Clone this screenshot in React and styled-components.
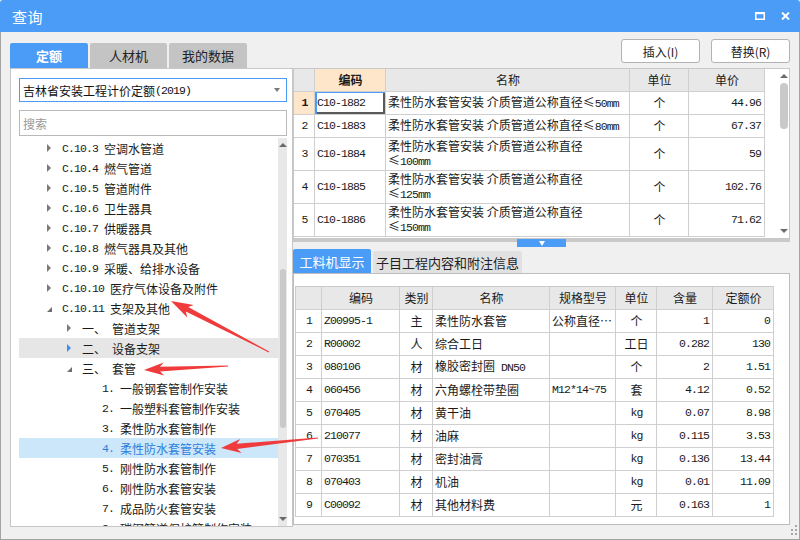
import React from 'react';
import styled, { createGlobalStyle } from 'styled-components';

const CJK = `"Noto Sans CJK SC", "Noto Sans", sans-serif`;
const MONO = `"Liberation Mono", "DejaVu Sans Mono", monospace`;

const GlobalStyle = createGlobalStyle`
  html, body { margin: 0; padding: 0; background: #ffffff; }
  body { font-family: ${CJK}; font-size: 12px; color: #1e1e1e; }
  * { box-sizing: border-box; }
`;

const Window = styled.div`
  position: relative;
  width: 800px;
  height: 540px;
  display: flex;
  flex-direction: column;
  background: #f0f0f0;
  font-family: ${CJK};
  overflow: hidden;
`;

const TitleBar = styled.div`
  height: 32px;
  flex: none;
  background: #4a9cf7;
  color: #fff;
  display: flex;
  align-items: center;
  padding: 0 10px 0 12px;
  border-radius: 3px 3px 0 0;
`;

const Title = styled.div`
  flex: 1;
  font-size: 15px;
  letter-spacing: 0.5px;
`;

const TitleButtons = styled.div`
  display: flex;
  align-items: center;
  gap: 16px;
`;

const Body = styled.div`
  flex: 1;
  display: flex;
  align-items: flex-start;
  padding: 7px 0 0 9px;
  border: 1px solid #a3a3a3;
  border-top: none;
`;

/* ---------- left column ---------- */
const LeftCol = styled.div`
  width: 283px;
  margin-top: 4px;
  display: flex;
  flex-direction: column;
  flex: none;
`;

const TabRow = styled.div`
  display: flex;
  gap: 2px;
  height: 25px;
  align-items: flex-end;
`;

const MainTab = styled.div`
  width: ${p => p.$w}px;
  height: 25px;
  display: flex;
  align-items: center;
  justify-content: center;
  font-size: 13px;
  border-radius: 2px 2px 0 0;
  background: ${p => (p.$active ? '#4a9cf7' : '#c4c4c4')};
  color: ${p => (p.$active ? '#ffffff' : '#222222')};
  font-weight: ${p => (p.$active ? 700 : 400)};
`;

const LeftPanel = styled.div`
  height: 459px;
  background: #fff;
  border: 1px solid #c6c6c6;
  padding: 9px 5px 0 8px;
  display: flex;
  flex-direction: column;
`;

const Select = styled.div`
  height: 24px;
  border: 1px solid #4a9cf7;
  display: flex;
  align-items: center;
  padding: 0 6px 0 3px;
  font-size: 12px;
  color: #111;
`;

const SelectText = styled.div`
  flex: 1;
  display: flex;
  align-items: center;
`;

const CaretDown = styled.span`
  width: 0;
  height: 0;
  border-left: 3px solid transparent;
  border-right: 3px solid transparent;
  border-top: 4px solid #7a7a7a;
`;

const Search = styled.div`
  height: 26px;
  margin-top: 8px;
  border: 1px solid #b9b9b9;
  display: flex;
  align-items: center;
  padding-left: 3px;
  color: #9a9a9a;
  font-size: 12px;
`;

const Tree = styled.div`
  flex: 1;
  margin-top: 2px;
  display: flex;
  overflow: hidden;
`;

const TreeRows = styled.div`
  flex: 1;
  overflow: hidden;
`;

const TreeRow = styled.div`
  height: 20px;
  display: flex;
  align-items: center;
  padding-left: ${p => 27 + (p.$level - 1) * 20}px;
  white-space: nowrap;
  font-size: 12px;
  background: ${p => (p.$selected ? '#cce6fa' : p.$hover ? '#e6e6e6' : 'transparent')};
  color: ${p => (p.$selected ? '#2f80dc' : '#1a1a1a')};
`;

const ToggleBox = styled.span`
  width: 16px;
  height: 20px;
  flex: none;
  display: flex;
  align-items: center;
`;

const ClosedTri = styled.span`
  width: 0;
  height: 0;
  border-top: 4px solid transparent;
  border-bottom: 4px solid transparent;
  border-left: 4px solid ${p => (p.$hover ? '#3d8fe9' : '#7a7a7a')};
  margin-left: 1px;
`;

const OpenTri = styled.span`
  width: 0;
  height: 0;
  border-left: 5px solid transparent;
  border-bottom: 5px solid #6e6e6e;
  margin-left: 1px;
  margin-top: 2px;
`;

const Code = styled.span`
  font-family: ${p => (p.$cjk ? CJK : MONO)};
  font-size: ${p => (p.$cjk ? 12 : 11.5)}px;
  letter-spacing: ${p => (p.$cjk ? 0 : -0.9)}px;
  margin-right: 6px;
`;

const Label = styled.span`
  font-family: ${CJK};
  font-size: 12px;
`;

const Mono = styled.span`
  font-family: ${MONO};
  font-size: 11.5px;
  letter-spacing: -0.9px;
`;

const VScroll = styled.div`
  width: ${p => p.$w}px;
  flex: none;
  display: flex;
  flex-direction: column;
  align-items: center;
  background: ${p => p.$track};
`;

const ScrollArrow = styled.div`
  height: ${p => p.$h}px;
  flex: none;
  display: flex;
  align-items: center;
  justify-content: center;
`;

const UpTri = styled.span`
  width: 0;
  height: 0;
  border-left: 4px solid transparent;
  border-right: 4px solid transparent;
  border-bottom: 4px solid #6a6a6a;
`;

const DownTri = styled.span`
  width: 0;
  height: 0;
  border-left: 4px solid transparent;
  border-right: 4px solid transparent;
  border-top: 4px solid #6a6a6a;
`;

const ScrollGap = styled.div`
  flex: ${p => (p.$grow ? 1 : 'none')};
  height: ${p => (p.$grow ? 'auto' : `${p.$h}px`)};
`;

const Thumb = styled.div`
  width: ${p => p.$w}px;
  height: ${p => p.$h}px;
  flex: none;
  border-radius: ${p => p.$w / 2}px;
  background: #c9c9c9;
`;

/* ---------- right column ---------- */
const RightCol = styled.div`
  width: 497px;
  flex: none;
  display: flex;
  flex-direction: column;
`;

const ButtonRow = styled.div`
  display: flex;
  justify-content: flex-end;
  gap: 11px;
  height: 24px;
`;

const Button = styled.div`
  width: 79px;
  height: 24px;
  background: #ffffff;
  border: 1px solid #b3b3b3;
  border-radius: 3px;
  display: flex;
  align-items: center;
  justify-content: center;
  font-size: 12px;
  color: #222;
`;

const TopPanel = styled.div`
  margin-top: 5px;
  height: 171px;
  background: #fff;
  border: 1px solid #c8c8c8;
  display: flex;
  overflow: hidden;
`;

const Grid = styled.div`
  width: ${p => p.$w}px;
  flex: none;
  border-left: ${p => (p.$outline ? '1px solid #cacaca' : 'none')};
  border-top: ${p => (p.$outline ? '1px solid #cacaca' : 'none')};
  align-self: flex-start;
`;

const GridRow = styled.div`
  display: grid;
  grid-template-columns: ${p => p.$cols};
  height: ${p => p.$h}px;
`;

const Cell = styled.div`
  border-right: 1px solid #cfcfcf;
  border-bottom: 1px solid #cfcfcf;
  display: flex;
  align-items: center;
  justify-content: ${p => (p.$align === 'right' ? 'flex-end' : p.$align === 'center' ? 'center' : 'flex-start')};
  padding: 0 ${p => (p.$align === 'right' ? 3 : 1)}px 0 2px;
  background: ${p => p.$bg || 'transparent'};
  font-weight: ${p => (p.$bold ? 700 : 400)};
  font-size: 12px;
  line-height: 14px;
  white-space: pre-line;
  overflow: hidden;
  color: #1a1a1a;
  box-shadow: ${p => (p.$focus ? 'inset 2px 1px 0 #4a9cf7, inset -2px -2px 0 #5a5a5a' : 'none')};
`;

const NameText = styled.div`
  white-space: pre-line;
  line-height: 14px;
`;

const Splitter = styled.div`
  height: 8px;
  display: flex;
  justify-content: center;
  background: linear-gradient(#c9c9c9 0 3px, transparent 3px);
`;

const SplitHandle = styled.div`
  width: 49px;
  height: 8px;
  background: #4a9cf7;
  display: flex;
  align-items: center;
  justify-content: center;
`;

const HandleTri = styled.span`
  width: 0;
  height: 0;
  border-left: 3px solid transparent;
  border-right: 3px solid transparent;
  border-top: 5px solid #ffffff;
`;

const SubTabRow = styled.div`
  margin-top: 2px;
  height: 24px;
  display: flex;
  align-items: flex-end;
  gap: 2px;
`;

const SubTab = styled.div`
  width: ${p => p.$w}px;
  height: ${p => (p.$active ? 24 : 22)}px;
  display: flex;
  align-items: center;
  justify-content: center;
  font-size: 13px;
  border-radius: 2px 2px 0 0;
  background: ${p => (p.$active ? '#4a9cf7' : '#e1e1e1')};
  color: ${p => (p.$active ? '#ffffff' : '#222222')};
`;

const BottomPanel = styled.div`
  height: 252px;
  background: #fff;
  border: 1px solid #bdbdbd;
  padding: 12px 0 0 1px;
  overflow: hidden;
`;

const Overlay = styled.svg`
  position: absolute;
  left: 0;
  top: 0;
  pointer-events: none;
`;

const Grip = styled.svg`
  position: absolute;
  right: 2px;
  bottom: 4px;
`;

/* ---------- data ---------- */
const tree = [
  { level: 1, state: 'closed', code: 'C.10.3', label: '空调水管道' },
  { level: 1, state: 'closed', code: 'C.10.4', label: '燃气管道' },
  { level: 1, state: 'closed', code: 'C.10.5', label: '管道附件' },
  { level: 1, state: 'closed', code: 'C.10.6', label: '卫生器具' },
  { level: 1, state: 'closed', code: 'C.10.7', label: '供暖器具' },
  { level: 1, state: 'closed', code: 'C.10.8', label: '燃气器具及其他' },
  { level: 1, state: 'closed', code: 'C.10.9', label: '采暖、给排水设备' },
  { level: 1, state: 'closed', code: 'C.10.10', label: '医疗气体设备及附件' },
  { level: 1, state: 'open', code: 'C.10.11', label: '支架及其他' },
  { level: 2, state: 'closed', code: '一、', cjk: true, label: '管道支架' },
  { level: 2, state: 'closed', code: '二、', cjk: true, label: '设备支架', hover: true },
  { level: 2, state: 'open', code: '三、', cjk: true, label: '套管' },
  { level: 3, code: '1.', label: '一般钢套管制作安装' },
  { level: 3, code: '2.', label: '一般塑料套管制作安装' },
  { level: 3, code: '3.', label: '柔性防水套管制作' },
  { level: 3, code: '4.', label: '柔性防水套管安装', selected: true },
  { level: 3, code: '5.', label: '刚性防水套管制作' },
  { level: 3, code: '6.', label: '刚性防水套管安装' },
  { level: 3, code: '7.', label: '成品防火套管安装' },
  { level: 3, code: '8.', label: '碳钢管道保护管制作安装' },
];

const topCols = '21px 71px 244px 59px 76px';
const topRows = [
  { n: '1', code: 'C10-1882', name: ['柔性防水套管安装 介质管道公称直径≤', '50mm'], unit: '个', price: '44.96', h: 23 },
  { n: '2', code: 'C10-1883', name: ['柔性防水套管安装 介质管道公称直径≤', '80mm'], unit: '个', price: '67.37', h: 23 },
  { n: '3', code: 'C10-1884', name: ['柔性防水套管安装 介质管道公称直径\n≤', '100mm'], unit: '个', price: '59', h: 33 },
  { n: '4', code: 'C10-1885', name: ['柔性防水套管安装 介质管道公称直径\n≤', '125mm'], unit: '个', price: '102.76', h: 33 },
  { n: '5', code: 'C10-1886', name: ['柔性防水套管安装 介质管道公称直径\n≤', '150mm'], unit: '个', price: '71.62', h: 33 },
];

const botCols = '26px 78px 33px 117px 66px 41px 56px 61px';
const botRows = [
  ['1', 'Z00995-1', '主', '柔性防水套管', '公称直径…', '个', '1', '0'],
  ['2', 'R00002', '人', '综合工日', '', '工日', '0.282', '130'],
  ['3', '080106', '材', '橡胶密封圈 DN50', '', '个', '2', '1.51'],
  ['4', '060456', '材', '六角螺栓带垫圈', 'M12*14~75', '套', '4.12', '0.52'],
  ['5', '070405', '材', '黄干油', '', 'kg', '0.07', '8.98'],
  ['6', '210077', '材', '油麻', '', 'kg', '0.115', '3.53'],
  ['7', '070351', '材', '密封油膏', '', 'kg', '0.136', '13.44'],
  ['8', '070403', '材', '机油', '', 'kg', '0.01', '11.09'],
  ['9', 'C00092', '材', '其他材料费', '', '元', '0.163', '1'],
];

function arrowPoints(tail, tip, o) {
  const { head = 20, hw = 7, neck = 4, sw = 2.5, tw = 0.4 } = o || {};
  const [tx, ty] = tail;
  const [px, py] = tip;
  const dx = px - tx;
  const dy = py - ty;
  const L = Math.hypot(dx, dy);
  const ux = dx / L;
  const uy = dy / L;
  const nx = -uy;
  const ny = ux;
  const bx = px - ux * head;
  const by = py - uy * head;
  const kx = bx + ux * neck;
  const ky = by + uy * neck;
  const pts = [
    [px, py],
    [bx + nx * hw, by + ny * hw],
    [kx + nx * sw, ky + ny * sw],
    [tx + nx * tw, ty + ny * tw],
    [tx - nx * tw, ty - ny * tw],
    [kx - nx * sw, ky - ny * sw],
    [bx - nx * hw, by - ny * hw],
  ];
  return pts.map(p => `${p[0].toFixed(1)},${p[1].toFixed(1)}`).join(' ');
}

function CellText({ text }) {
  if (/^[A-Za-z0-9.*~\-]+$/.test(text)) return <Mono>{text}</Mono>;
  const m = text.match(/^(.*?)( [A-Z]+\d+)$/);
  if (m) {
    return (
      <span>
        {m[1]}
        <Mono>{m[2]}</Mono>
      </span>
    );
  }
  return <span>{text}</span>;
}

export default function App() {
  return (
    <>
      <GlobalStyle />
      <Window>
        <TitleBar>
          <Title>查询</Title>
          <TitleButtons>
            <svg width="10" height="8" viewBox="0 0 10 8">
              <rect x="0.75" y="1" width="8.5" height="6.25" fill="none" stroke="#fff" strokeWidth="1.5" />
              <rect x="0" y="0" width="10" height="2.2" fill="#fff" />
            </svg>
            <svg width="9" height="8" viewBox="0 0 9 8">
              <path d="M1 0.5 L8 7.5 M8 0.5 L1 7.5" stroke="#fff" strokeWidth="2" />
            </svg>
          </TitleButtons>
        </TitleBar>
        <Body>
          <LeftCol>
            <TabRow>
              <MainTab $active $w={78}>定额</MainTab>
              <MainTab $w={77}>人材机</MainTab>
              <MainTab $w={78}>我的数据</MainTab>
            </TabRow>
            <LeftPanel>
              <Select>
                <SelectText>
                  吉林省安装工程计价定额<Mono>(2019)</Mono>
                </SelectText>
                <CaretDown />
              </Select>
              <Search>搜索</Search>
              <Tree>
                <TreeRows>
                  {tree.map((r, i) => (
                    <TreeRow key={i} $level={r.level} $hover={r.hover} $selected={r.selected}>
                      <ToggleBox>
                        {r.state === 'closed' && <ClosedTri $hover={r.hover} />}
                        {r.state === 'open' && <OpenTri />}
                      </ToggleBox>
                      <Code $cjk={r.cjk}>{r.code}</Code>
                      <Label>{r.label}</Label>
                    </TreeRow>
                  ))}
                </TreeRows>
                <VScroll $w={9} $track="#e8e8e8">
                  <ScrollArrow $h={14}>
                    <UpTri />
                  </ScrollArrow>
                  <ScrollGap $h={117} />
                  <Thumb $w={6} $h={159} />
                  <ScrollGap $grow />
                  <ScrollArrow $h={14}>
                    <DownTri />
                  </ScrollArrow>
                </VScroll>
              </Tree>
            </LeftPanel>
          </LeftCol>

          <RightCol>
            <ButtonRow>
              <Button>插入(I)</Button>
              <Button>替换(R)</Button>
            </ButtonRow>
            <TopPanel>
              <Grid $w={471}>
                <GridRow $cols={topCols} $h={23}>
                  <Cell $bg="#e8e8e8" />
                  <Cell $bg="#fde6c9" $align="center" $bold>编码</Cell>
                  <Cell $bg="#e8e8e8" $align="center">名称</Cell>
                  <Cell $bg="#e8e8e8" $align="center">单位</Cell>
                  <Cell $bg="#e8e8e8" $align="center">单价</Cell>
                </GridRow>
                {topRows.map((r, i) => (
                  <GridRow key={i} $cols={topCols} $h={r.h}>
                    <Cell $align="center" $bg={i === 0 ? '#fde6c9' : undefined} $bold={i === 0}>
                      <Mono>{r.n}</Mono>
                    </Cell>
                    <Cell $focus={i === 0}>
                      <Mono>{r.code}</Mono>
                    </Cell>
                    <Cell>
                      <NameText>
                        {r.name[0]}
                        <Mono>{r.name[1]}</Mono>
                      </NameText>
                    </Cell>
                    <Cell $align="center">{r.unit}</Cell>
                    <Cell $align="right">
                      <Mono>{r.price}</Mono>
                    </Cell>
                  </GridRow>
                ))}
              </Grid>
              <ScrollGap $grow />
              <VScroll $w={11} $track="#ffffff">
                <ScrollArrow $h={14}>
                  <UpTri />
                </ScrollArrow>
                <Thumb $w={8} $h={46} />
                <ScrollGap $grow />
                <ScrollArrow $h={14}>
                  <DownTri />
                </ScrollArrow>
              </VScroll>
            </TopPanel>
            <Splitter>
              <SplitHandle>
                <HandleTri />
              </SplitHandle>
            </Splitter>
            <SubTabRow>
              <SubTab $active $w={78}>工料机显示</SubTab>
              <SubTab $w={149}>子目工程内容和附注信息</SubTab>
            </SubTabRow>
            <BottomPanel>
              <Grid $w={479} $outline>
                <GridRow $cols={botCols} $h={23}>
                  <Cell $bg="#e8e8e8" />
                  {['编码', '类别', '名称', '规格型号', '单位', '含量', '定额价'].map(h => (
                    <Cell key={h} $bg="#e8e8e8" $align="center">
                      {h}
                    </Cell>
                  ))}
                </GridRow>
                {botRows.map((r, i) => (
                  <GridRow key={i} $cols={botCols} $h={23}>
                    <Cell $align="center">
                      <Mono>{r[0]}</Mono>
                    </Cell>
                    <Cell>
                      <Mono>{r[1]}</Mono>
                    </Cell>
                    <Cell $align="center">{r[2]}</Cell>
                    <Cell>
                      <CellText text={r[3]} />
                    </Cell>
                    <Cell>{r[4] && <CellText text={r[4]} />}</Cell>
                    <Cell $align="center">
                      <CellText text={r[5]} />
                    </Cell>
                    <Cell $align="right">
                      <Mono>{r[6]}</Mono>
                    </Cell>
                    <Cell $align="right">
                      <Mono>{r[7]}</Mono>
                    </Cell>
                  </GridRow>
                ))}
              </Grid>
            </BottomPanel>
          </RightCol>
        </Body>

        <Grip width="8" height="12" viewBox="0 0 8 12">
          {[[6, 2], [6, 6], [2, 6], [6, 10], [2, 10]].map(([x, y], i) => (
            <rect key={i} x={x - 1} y={y - 1} width="2" height="2" fill="#a8a8a8" />
          ))}
        </Grip>

        <Overlay width="800" height="540" viewBox="0 0 800 540">
          <polygon points={arrowPoints([269, 352], [171, 301], { head: 22, hw: 7, sw: 2.6 })} fill="#ef3b3b" />
          <polygon points={arrowPoints([228, 366], [144, 370], { head: 20, hw: 6.5, sw: 2.4 })} fill="#ef3b3b" />
          <polygon points={arrowPoints([318, 438], [221, 448], { head: 20, hw: 7, sw: 2.6 })} fill="#ef3b3b" />
        </Overlay>
      </Window>
    </>
  );
}
